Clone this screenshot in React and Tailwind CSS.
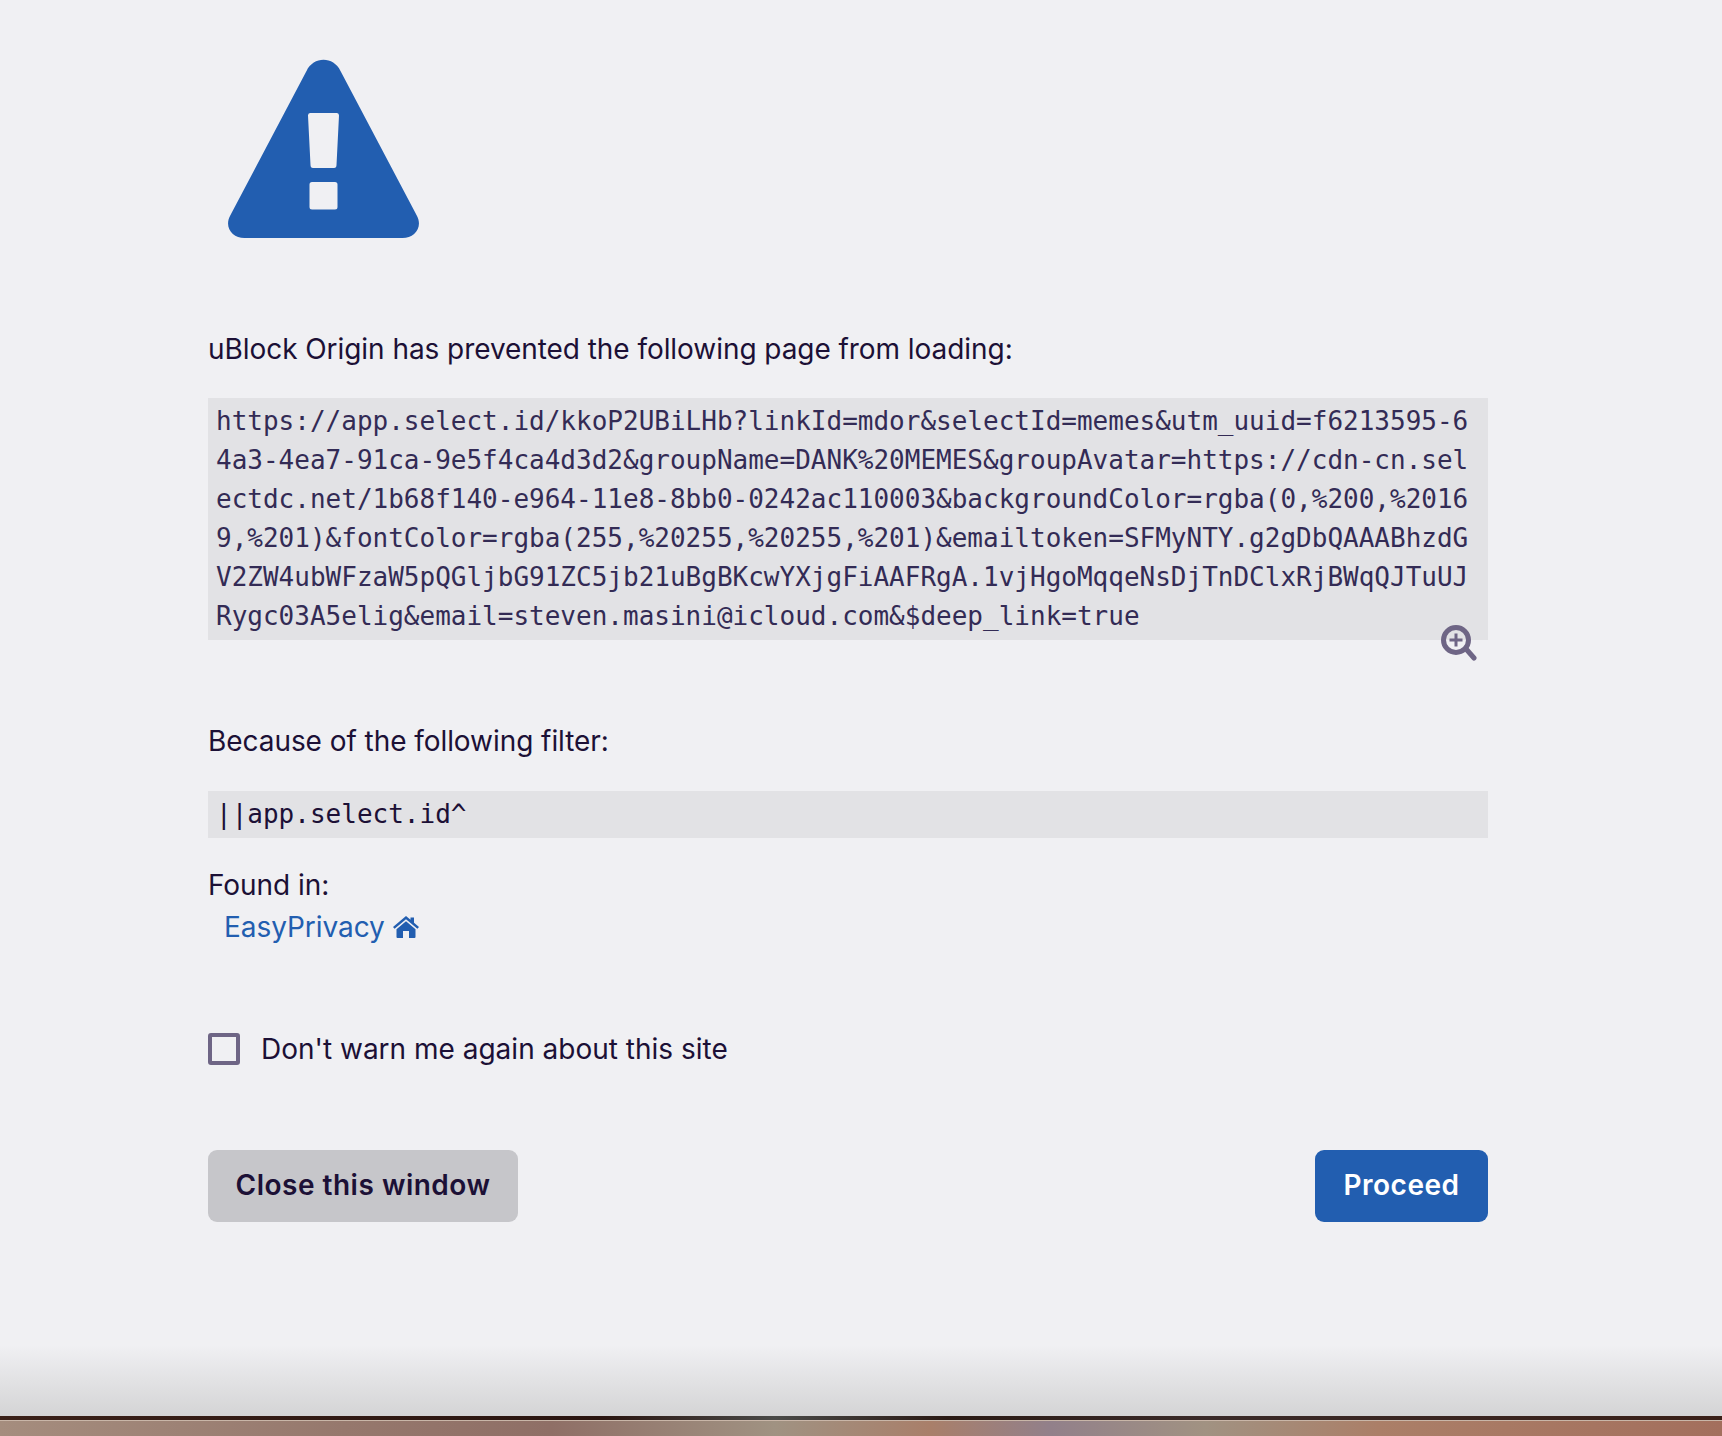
const SANS = "font-['Inter','Noto_Sans',sans-serif]"

const URL_TEXT = 'https://app.select.id/kkoP2UBiLHb?linkId=mdor&selectId=memes&utm_uuid=f6213595-64a3-4ea7-91ca-9e5f4ca4d3d2&groupName=DANK%20MEMES&groupAvatar=https://cdn-cn.selectdc.net/1b68f140-e964-11e8-8bb0-0242ac110003&backgroundColor=rgba(0,%200,%20169,%201)&fontColor=rgba(255,%20255,%20255,%201)&emailtoken=SFMyNTY.g2gDbQAAABhzdGV2ZW4ubWFzaW5pQGljbG91ZC5jb21uBgBKcwYXjgFiAAFRgA.1vjHgoMqqeNsDjTnDClxRjBWqQJTuUJRygc03A5elig&email=steven.masini@icloud.com&$deep_link=true'

function WarningIcon() {
  return (
    <svg viewBox="0 0 193 180" className="w-[193px] h-[180px] block" fill="none">
      <path
        fillRule="evenodd"
        d="M79.5 12 C86.5 -3 106.5 -3 113.5 12 L189.5 156 C196.5 168 187.5 179 175.5 179 L17.5 179 C5.5 179 -3.5 168 3.5 156 Z M83 54 Q81 54 81 56.5 L83.5 106 Q83.5 109 86 109 L107 109 Q109.5 109 109.5 106 L112 56.5 Q112 54 110 54 Z M85 123 Q82.5 123 82.5 125.5 L82.5 148 Q82.5 150.5 85 150.5 L108 150.5 Q110.5 150.5 110.5 148 L110.5 125.5 Q110.5 123 108 123 Z"
        fill="#225eb0"
      />
    </svg>
  )
}

function ZoomIcon() {
  return (
    <svg viewBox="0 0 36 36" className="w-9 h-9 block" fill="none" stroke="#6e6585">
      <circle cx="15" cy="15" r="12.5" strokeWidth="5" />
      <path d="M26 25 L33 33" strokeWidth="5" strokeLinecap="round" />
      <path d="M15 8.5 V21.5 M8.5 15 H21.5" strokeWidth="3" />
    </svg>
  )
}

function HomeIcon() {
  return (
    <svg viewBox="0 0 26 22" className="w-[26px] h-[22px] block" fill="#225eb0">
      <path d="M13 0 L17.5 3.8 V1.5 H21 V6.8 L26 11 L24.4 12.8 L13 3.2 L1.6 12.8 L0 11 Z" />
      <path d="M13 5.2 L22.5 13.2 V21 Q22.5 22 21.5 22 H16 V15 H10 V22 H4.5 Q3.5 22 3.5 21 V13.2 Z" />
    </svg>
  )
}

export default function App() {
  return (
    <div className={`h-[1436px] flex flex-col overflow-hidden bg-[#f0f0f3] text-[#1c1036] ${SANS}`}>
      <main className="flex-1 min-h-0 pl-[208px] pr-[234px] bg-gradient-to-b from-[#f0f0f3] from-[1345px] to-[#d4d4d5]">
        <div className="pt-[59px] pl-[19px]">
          <WarningIcon />
        </div>

        <p className="mt-[89px] text-[28px] leading-[42px] tracking-[-0.06px]">uBlock Origin has prevented the following page from loading:</p>

        <div className="relative mt-[28px]">
          <div className="bg-[#e2e2e5] px-2 py-1 font-['DejaVu_Sans_Mono',monospace] text-[26px] leading-[39px] text-[#332b55] break-all">
            {URL_TEXT}
          </div>
          <div className="absolute right-[11px] top-[227px]">
            <ZoomIcon />
          </div>
        </div>

        <p className="mt-[80px] text-[28px] leading-[42px] tracking-[-0.06px]">Because of the following filter:</p>

        <div className="mt-[29px] bg-[#e2e2e5] px-2 py-[4px] font-['DejaVu_Sans_Mono',monospace] text-[26px] leading-[39px]">
          ||app.select.id^
        </div>

        <p className="mt-[26px] text-[28px] leading-[42px] tracking-[-0.06px]">Found in:</p>
        <div className="pl-4 flex items-center gap-2 text-[28px] leading-[42px] tracking-[-0.06px] text-[#225eb0]">
          <span>EasyPrivacy</span>
          <HomeIcon />
        </div>

        <label className="mt-[80px] flex items-center gap-[21px] text-[28px] leading-[42px]">
          <span className="w-8 h-8 rounded-[3px] border-4 border-[#6e6585]" />
          <span>Don't warn me again about this site</span>
        </label>

        <div className="mt-[80px] flex justify-between">
          <button className="h-[72px] w-[310px] pb-[2px] rounded-[9px] bg-[#c6c6ca] text-[28px] font-semibold tracking-[0.5px] text-[#1c1036]">
            Close this window
          </button>
          <button className="h-[72px] w-[173px] pb-[2px] rounded-[9px] bg-[#225eb0] text-[28px] font-semibold tracking-[0.5px] text-white">
            Proceed
          </button>
        </div>
      </main>

      <div className="h-1 bg-[linear-gradient(to_right,#3a2018_0%,#2a1510_35%,#4a4a48_45%,#2a1a14_55%,#3a2a28_70%,#3a2018_100%)]" />
      <div className="h-[16px] border-t border-[#c9b6a8] bg-[linear-gradient(to_right,#a58d7e_0%,#96786d_20%,#8f6f66_32%,#a09282_45%,#a97f6a_54%,#92808a_61%,#a19282_70%,#ab7f68_80%,#a36f5d_100%)]" />
    </div>
  )
}
